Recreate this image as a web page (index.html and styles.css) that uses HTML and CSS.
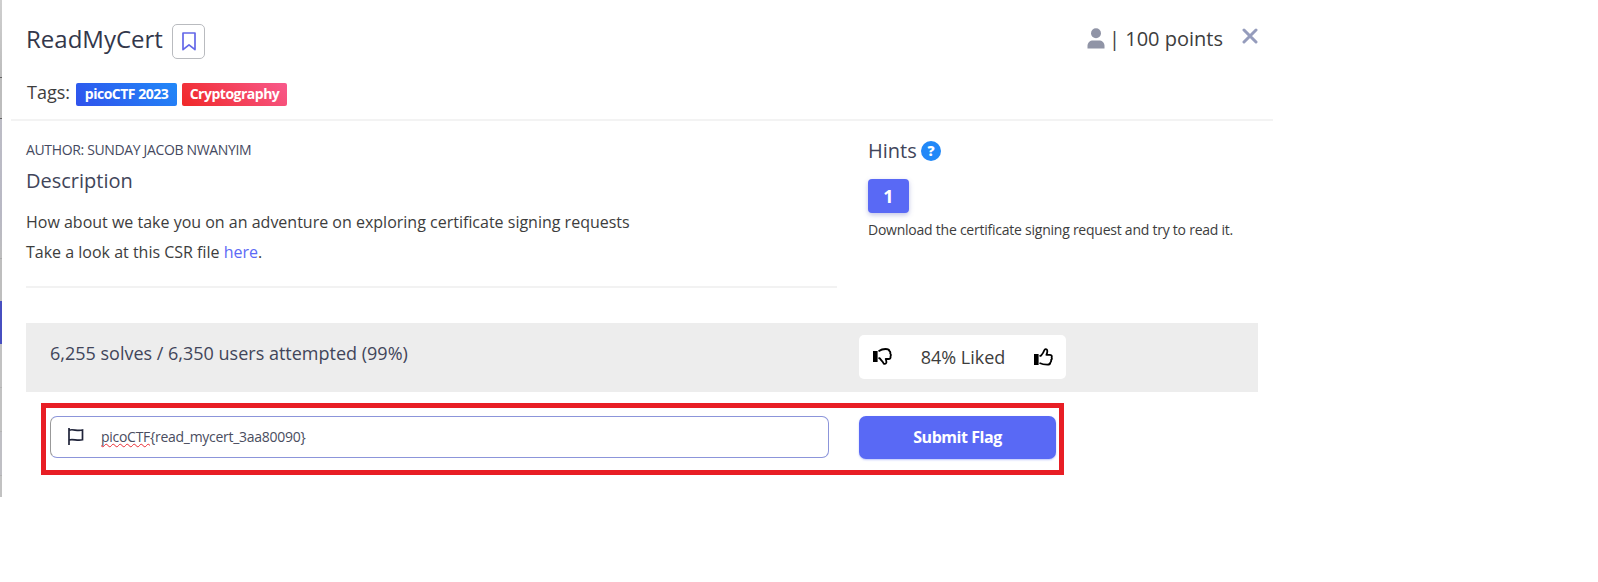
FILE: index.html
```html
<!DOCTYPE html>
<html lang="en">
<head>
<meta charset="utf-8">
<title>ReadMyCert</title>
<link rel="stylesheet" href="styles.css">
</head>
<body>
<div class="page">
  <div class="backdrop"></div>
  <main class="modal">
    <header class="header">
      <div class="title-row">
        <h1 class="title">ReadMyCert</h1>
        <button class="bookmark" aria-label="Bookmark">
          <svg width="14" height="19" viewBox="0 0 14 19"><path d="M1 1h12v16.6l-6-4.8-6 4.8z" fill="none" stroke="#6468e8" stroke-width="1.7" stroke-linejoin="round"/></svg>
        </button>
        <div class="points">
          <svg class="user" width="18" height="21" viewBox="0 0 18 21"><circle cx="9" cy="5.2" r="5" fill="#9094a6"/><path d="M.5 20.5v-2.4c0-3.7 2.4-5.6 5.6-5.6h5.8c3.2 0 5.6 1.9 5.6 5.6v2.4z" fill="#9094a6"/></svg>
          <span class="points-text">| 100 points</span>
        </div>
        <svg class="close" width="16" height="16" viewBox="0 0 16 16"><path d="M2 2l12 12M14 2L2 14" stroke="#959cbc" stroke-width="3" stroke-linecap="round"/></svg>
      </div>
      <div class="tags">
        <span class="tags-label">Tags:</span>
        <span class="tag tag-blue">picoCTF 2023</span>
        <span class="tag tag-red">Cryptography</span>
      </div>
    </header>
    <div class="body">
      <section class="info">
        <div class="author">AUTHOR: SUNDAY JACOB NWANYIM</div>
        <h2 class="subtitle">Description</h2>
        <p class="copy">How about we take you on an adventure on exploring certificate signing requests<br>Take a look at this CSR file <a class="link">here</a>.</p>
      </section>
      <section class="hints">
        <div class="hints-head"><h2 class="hints-title">Hints</h2><span class="help">?</span></div>
        <button class="hint-number">1</button>
        <p class="hint-text">Download the certificate signing request and try to read it.</p>
      </section>
    </div>
    <div class="stats">
      <div class="solves">6,255 solves / 6,350 users attempted (99%)</div>
      <div class="rating">
        <svg width="19" height="18" viewBox="0 0 19 18"><path d="M0 3h4.6v11H0z"/><path d="M5.5 3.2C8 1.6 10 1 12.5 1c2.500 0 3.700.6 3.900 2 1 .7 1.100 1.600.8 2.500.8.9.9 1.900.3 2.800.4 1.800-.5 2.700-2 2.700h-2.800c.6 1.500 1 2.800.5 4-.5 1.200-2 1.300-2.700.2C9.500 13 8 12.500 6.800 10.300L5.500 9.800" fill="none" stroke="#000" stroke-width="1.8" stroke-linejoin="round"/></svg>
        <span class="liked">84% Liked</span>
        <svg width="19" height="18" viewBox="0 0 19 18"><path d="M0 6h4.600v11H0z"/><path d="M5.500 8.200 7 7.700C8.500 6 9.500 4.500 10.300 2.200c.5-1.500 2.900-1.400 3 .6.1 1.300-.3 2.700-.9 4h3.300c1.700 0 2.500 1.300 1.900 2.500.5 1.100.3 2-.5 2.700.3 1.100 0 2-.8 2.600-.1 1.500-1.100 2-2.900 2-3 0-5.200-.3-7.900-1.600" fill="none" stroke="#000" stroke-width="1.8" stroke-linejoin="round"/></svg>
      </div>
    </div>
    <form class="flag-form">
      <div class="field">
        <svg width="16" height="17" viewBox="0 0 16 17"><path d="M1 0v17M1 2.200c4-1.600 8 1.300 13.500-.2v9.800c-5.500 1.500-9.500-1.400-13.500.2" fill="none" stroke="#20243a" stroke-width="1.700"/></svg>
        <span class="value"><span class="misspelled">picoCTF</span>{read_mycert_3aa80090}</span>
      </div>
      <button class="submit" type="button">Submit Flag</button>
    </form>
  </main>
</div>
</body>
</html>
```
FILE: styles.css
```css
* { box-sizing: border-box; }
body { margin: 0; background: #fff; font-family: "Open Sans", "Noto Sans", sans-serif; color: #3d3d3d; overflow: hidden; }
h1, h2, p { margin: 0; font-weight: 400; }
button { border: 0; padding: 0; font-family: inherit; }
svg { display: block; flex: none; }
.page { display: flex; height: 582px; align-items: flex-start; }
.backdrop { width: 2px; height: 497px; flex: none; background: linear-gradient(#cfcfcf, #bdbdbd 77px, #666 77px 78px, #bdbdbd 78px 118px, #666 118px 119px, #bdbdc6 119px, #b8b8c4 213px, #bebebe 258px, #aaa 258px 259px, #bebebe 259px 301px, #474fc0 301px 344px, #c2c2c2 344px 387px, #b4b4b4 387px 388px, #c2c2c2 388px 431px, #b4b4b4 431px 432px, #bfbfc4 432px 475px, #b4b4b4 475px 476px, #c2c2c2 476px); }
.modal { width: 1271px; }
.header { height: 121px; margin-left: 9px; padding: 24px 15px 0; border-bottom: 2px solid #f3f3f3; }
.title-row { display: flex; height: 35px; }
.title { font-size: 24px; line-height: 29px; width: 146px; color: #33374b; white-space: nowrap; }
.bookmark { width: 33px; height: 35px; border: 1px solid #b9bbbf; border-radius: 5px; background: #fff; display: flex; align-items: center; justify-content: center; }
.points { display: flex; margin-left: auto; margin-right: 19px; }
.user { margin: 4px 4px 0 0; }
.points-text { font-size: 20px; line-height: 30px; white-space: nowrap; }
.close { margin-top: 4px; }
.tags { display: flex; padding-top: 24px; }
.tags-label { width: 50px; padding-left: 1px; font-size: 18px; line-height: 18px; white-space: nowrap; }
.tag { height: 23px; border-radius: 2px; color: #fff; font-size: 14px; line-height: 21px; font-weight: 700; letter-spacing: -.5px; text-align: center; white-space: nowrap; }
.tag-blue { width: 101px; margin-right: 5px; background: linear-gradient(45deg, #3052ec, #2188f8); }
.tag-red { width: 105px; background: linear-gradient(45deg, #f02828, #f85a8c); }
.body { display: flex; height: 202px; padding: 17px 15px 0 24px; }
.info { width: 811px; height: 150px; border-bottom: 2px solid #f2f2f2; margin-right: 31px; }
.author { font-size: 14px; line-height: 24px; letter-spacing: -.35px; color: #454960; }
.subtitle { font-size: 20px; line-height: 30px; margin-top: 4px; color: #41455a; }
.copy { font-size: 16px; line-height: 30px; margin-top: 11px; white-space: nowrap; }
.link { color: #5c6af5; }
.hints-head { display: flex; height: 41px; }
.hints-title { font-size: 20px; line-height: 26px; width: 53px; color: #41455a; }
.help { width: 20px; height: 20px; margin-top: 3px; border-radius: 50%; background: #2188f8; color: #fff; font-weight: 800; font-size: 14px; line-height: 19px; text-align: center; }
.hint-number { display: block; width: 41px; height: 34px; border-radius: 4px; background: #5969f5; color: #fff; font-size: 18px; font-weight: 700; box-shadow: 0 2px 5px rgba(80,90,180,.35); }
.hint-text { font-size: 14px; line-height: 20px; letter-spacing: -.24px; margin-top: 7px; white-space: nowrap; }
.stats { display: flex; margin-left: 24px; width: 1232px; height: 69px; padding: 12px 0 0 24px; background: #ededed; }
.solves { width: 809px; font-size: 18px; line-height: 36px; color: #41455a; }
.rating { width: 207px; height: 44px; padding: 0 13px 0 14px; border-radius: 5px; background: #fff; display: flex; align-items: center; justify-content: space-between; }
.liked { font-size: 18px; line-height: 44px; }
.flag-form { display: flex; width: 1023px; height: 72px; margin: 11px 0 0 39px; padding: 8px 3px 0 4px; border: 5px solid #e81e25; }
.field { display: flex; align-items: center; width: 779px; height: 42px; margin-right: 30px; padding: 0 0 1px 17px; border: 1px solid #8c95da; border-left-color: #999; border-radius: 7px; }
.value { margin-left: 17px; font-size: 14px; letter-spacing: -.28px; color: #4a4d60; }
.misspelled { text-decoration: underline wavy #e82c34 1px; text-underline-offset: 1px; text-decoration-skip-ink: none; }
.submit { width: 197px; height: 43px; padding-bottom: 2px; border-radius: 7px; background: #5969f5; color: #fff; font-size: 16px; letter-spacing: -.45px; font-weight: 700; box-shadow: 0 1px 2px rgba(90,110,245,.4); }
```
